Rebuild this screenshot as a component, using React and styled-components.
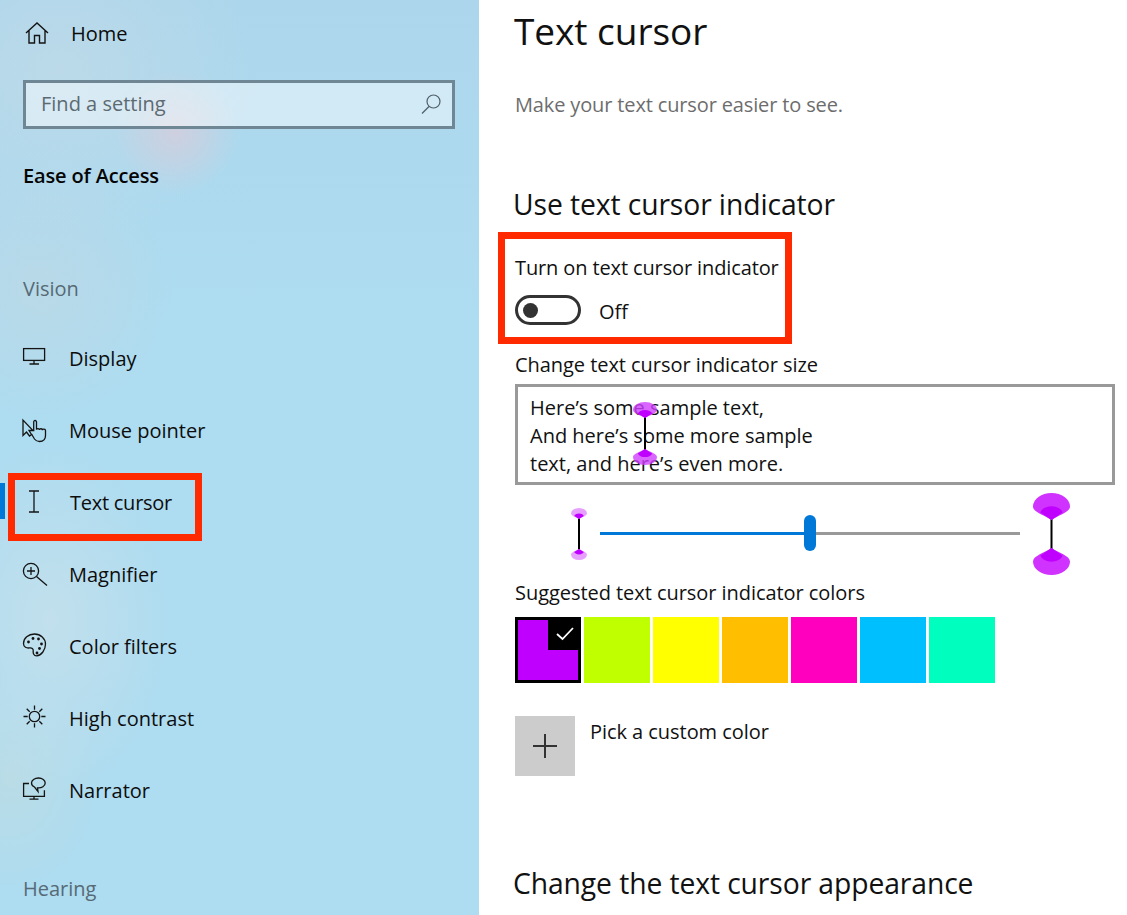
import React from "react";
import styled, { createGlobalStyle } from "styled-components";

const GlobalStyle = createGlobalStyle`
  html, body {
    margin: 0;
    padding: 0;
    height: 915px;
    overflow: hidden;
    background: #fff;
    font-family: "Open Sans", "Noto Sans", sans-serif;
    color: #111;
  }
`;

const Page = styled.div`
  display: flex;
  width: 1127px;
  height: 915px;
  overflow: hidden;
`;

const Sidebar = styled.aside`
  width: 479px;
  flex: none;
  height: 915px;
  overflow: hidden;
  background:
    radial-gradient(circle 62px at 176px 132px, rgba(216, 204, 218, 0.75), rgba(216, 204, 218, 0) 100%),
    radial-gradient(ellipse 200px 170px at 60px 70px, rgba(190, 218, 232, 0.85), rgba(190, 218, 232, 0) 100%),
    radial-gradient(ellipse 130px 130px at 40px 290px, rgba(190, 216, 228, 0.7), rgba(190, 216, 228, 0) 100%),
    radial-gradient(ellipse 120px 180px at 50px 620px, rgba(196, 224, 236, 0.9), rgba(196, 224, 236, 0) 100%),
    radial-gradient(ellipse 90px 110px at 10px 780px, rgba(190, 220, 226, 0.7), rgba(190, 220, 226, 0) 100%),
    linear-gradient(180deg, #acd6ec 0, #aedcf0 320px);
`;

const HomeRow = styled.div`
  display: flex;
  align-items: center;
  height: 66px;
  padding-left: 24px;
  gap: 21px;
  font-size: 20px;
  color: #0c0c0c;
`;

const SearchBox = styled.div`
  display: flex;
  align-items: center;
  justify-content: space-between;
  box-sizing: border-box;
  width: 432px;
  height: 49px;
  margin: 14px 0 0 23px;
  padding: 0 10px 2px 15px;
  border: 3px solid #6f8794;
  background: rgba(255, 255, 255, 0.46);
  font-size: 20px;
  color: #5d6a72;
`;

const SectionTitle = styled.div`
  margin: 32px 0 0 23px;
  height: 30px;
  line-height: 30px;
  font-size: 20px;
  font-weight: 600;
  letter-spacing: -0.15px;
  color: #050505;
`;

const GroupLabel = styled.div`
  height: 30px;
  line-height: 30px;
  margin-left: 23px;
  margin-top: ${(p) => p.$top}px;
  font-size: 20px;
  color: #566a75;
`;

const NavList = styled.nav`
  display: flex;
  flex-direction: column;
  margin-top: 18px;
`;

const NavRow = styled.div`
  position: relative;
  display: flex;
  align-items: center;
  height: 72px;
  padding-left: 19px;
  gap: ${(p) => (p.$active ? 21 : 20)}px;
  font-size: 20px;
  letter-spacing: ${(p) => (p.$active ? "-0.25px" : "0")};
  color: #0d0d0d;

  ${(p) =>
    p.$active &&
    `
    &::before {
      content: "";
      position: absolute;
      left: 0;
      top: 17px;
      width: 5px;
      height: 36px;
      background: #0078d7;
    }
    &::after {
      content: "";
      position: absolute;
      left: 8px;
      top: 7px;
      width: 194px;
      height: 68px;
      box-sizing: border-box;
      border: 7px solid #ff2a00;
    }
  `}
`;

const NavIcon = styled.svg`
  width: 30px;
  height: 30px;
  flex: none;
  fill: none;
  stroke: #141414;
  stroke-width: 1.3;
`;

const Main = styled.main`
  flex: 1;
  min-width: 0;
  padding-left: 36px;
`;

const PageTitle = styled.h1`
  margin: 6px 0 0 -1px;
  height: 50px;
  line-height: 50px;
  font-size: 37px;
  font-weight: 400;
  letter-spacing: -0.05px;
  color: #111;
  font-family: "Open Sans", sans-serif;
`;

const Subtitle = styled.p`
  margin: 34px 0 0;
  height: 30px;
  line-height: 30px;
  font-size: 20px;
  letter-spacing: -0.14px;
  color: #6d6d6d;
`;

const Heading = styled.h2`
  margin: ${(p) => p.$top}px 0 0 -2px;
  height: 40px;
  line-height: 40px;
  font-size: 28.3px;
  font-weight: 400;
  letter-spacing: -0.1px;
  color: #111;
`;

const Callout = styled.section`
  box-sizing: border-box;
  width: 294px;
  height: 112px;
  margin: 8px 0 0 -17px;
  padding: 15px 0 0 10px;
  border: 7px solid #ff2a00;
`;

const FieldLabel = styled.div`
  height: 28px;
  line-height: 28px;
  font-size: 20px;
  letter-spacing: ${(p) => p.$track || "-0.05px"};
  white-space: nowrap;
  color: #111;
`;

const ToggleRow = styled.div`
  display: flex;
  align-items: center;
  gap: 18px;
  margin-top: 13px;
  font-size: 20px;
`;

const ToggleText = styled.span`
  margin-top: 3px;
`;

const Toggle = styled.span`
  display: flex;
  align-items: center;
  box-sizing: border-box;
  width: 66px;
  height: 30px;
  padding-left: 5px;
  border: 3px solid #333;
  border-radius: 15px;

  &::after {
    content: "";
    width: 15px;
    height: 15px;
    border-radius: 50%;
    background: #333;
  }
`;

const SizeLabel = styled(FieldLabel)`
  margin-top: 7px;
`;

const SampleBox = styled.div`
  position: relative;
  box-sizing: border-box;
  width: 600px;
  height: 101px;
  margin-top: 5px;
  padding: 7px 0 0 12px;
  border: 3px solid #999;
  font-size: 20px;
  line-height: 28px;
  color: #111;
`;

const SampleCursor = styled.span`
  position: absolute;
  left: 115px;
  top: 15px;
  display: block;
  line-height: 0;
`;

const SliderRow = styled.div`
  box-sizing: border-box;
  display: flex;
  align-items: center;
  height: 94px;
  padding-top: 3px;
  margin-left: 56px;
`;

const CursorSlot = styled.span`
  display: flex;
  flex: none;
  line-height: 0;
`;

const Track = styled.div`
  position: relative;
  width: 420px;
  height: 3px;
  margin: 0 13px;
  background: #999;
`;

const TrackFill = styled.div`
  height: 100%;
  background: #0078d7;
`;

const Thumb = styled.div`
  position: absolute;
  top: -17px;
  width: 12px;
  height: 36px;
  margin-left: -6px;
  border-radius: 6px;
  background: #0078d7;
`;

const Swatches = styled.div`
  display: flex;
  gap: 3px;
  margin-top: 10px;
`;

const Swatch = styled.div`
  position: relative;
  box-sizing: border-box;
  width: 66px;
  height: 66px;
  background: ${(p) => p.$color};
  ${(p) => p.$selected && "border: 3px solid #000;"}
`;

const Check = styled.span`
  position: absolute;
  right: -3px;
  top: -3px;
  display: flex;
  align-items: center;
  justify-content: center;
  width: 33px;
  height: 33px;
  background: #000;
`;

const CustomRow = styled.div`
  display: flex;
  gap: 15px;
  margin-top: 33px;
`;

const PlusTile = styled.div`
  display: flex;
  align-items: center;
  justify-content: center;
  width: 60px;
  height: 60px;
  background: #ccc;
`;

const CustomLabel = styled(FieldLabel)`
  margin-top: 2px;
`;

const navItems = [
  {
    label: "Display",
    icon: (
      <>
        <rect x="4.6" y="5.6" width="21" height="11.8" />
        <path d="M15 17.5v3M10.5 21h9.5" />
      </>
    ),
  },
  {
    label: "Mouse pointer",
    icon: (
      <>
        <path d="M4 5v15.5l3.5-3.5 3 4 2-1.5-2.5-4H14z" />
        <path d="M12.5 19l3 5c1.2 1.7 3 2.5 5 2.5 3.5 0 6-2 6-6v-5c0-1.8-3-2-3-.3 0-1.8-3-2-3-.3 0-1.6-3-1.8-3-.2V7c0-2-2.8-2-2.8 0v9" />
      </>
    ),
  },
  {
    label: "Text cursor",
    active: true,
    icon: <path d="M10 4h10M15 4v21M10 25h10" />,
  },
  {
    label: "Magnifier",
    icon: (
      <>
        <circle cx="12" cy="12" r="7.6" />
        <path d="M17.5 17.5l10.5 9M8 12h8M12 8v8" />
      </>
    ),
  },
  {
    label: "Color filters",
    icon: (
      <g transform="translate(0.5 -1)">
        <path d="M15 4C8.8 4 4 8.2 4 13.5c0 3.8 3.2 4.8 6 4.4 2.4-.3 4 .8 3.7 3-.3 2.4.6 5 3.3 5 5-.4 9-6 9-11.9C26 8.5 21 4 15 4z" />
        <circle cx="9" cy="12" r="1.4" fill="#141414" stroke="none" />
        <circle cx="13.5" cy="8.5" r="1.4" fill="#141414" stroke="none" />
        <circle cx="19" cy="9" r="1.4" fill="#141414" stroke="none" />
        <circle cx="22" cy="14" r="1.4" fill="#141414" stroke="none" />
        <circle cx="20" cy="18.5" r="1.4" fill="#141414" stroke="none" />
        <circle cx="17.5" cy="23" r="1.4" fill="#141414" stroke="none" />
      </g>
    ),
  },
  {
    label: "High contrast",
    icon: (
      <g transform="translate(0.5 -1.5)">
        <circle cx="15" cy="15" r="5.2" />
        <path d="M15 4v4.2M15 21.8V26M4 15h4.2M21.8 15H26M7.2 7.2l3 3M19.8 19.8l3 3M22.8 7.2l-3 3M10.2 19.8l-3 3" />
      </g>
    ),
  },
  {
    label: "Narrator",
    icon: (
      <g transform="translate(0 -1)">
        <path d="M10 9.5H4.6v12.8h20.8v-6" />
        <path d="M15 22.5v2.4M10.5 25.2h9" />
        <path d="M19.5 4c-3.8 0-7 2.2-7 5 0 1.8 1.3 3.2 3 4l3.5 4.5-.5-3.7c4.2.4 7.7-1.6 7.7-4.8 0-2.8-2.9-5-6.7-5z" />
      </g>
    ),
  },
];

const swatchColors = ["#bf00ff", "#bfff00", "#ffff00", "#ffbf00", "#ff00bf", "#00bfff", "#00ffbf"];

// top and bottom blobs share one shape, the bottom one is just flipped
const Blob = ({ w, lobe, outer, inner, flip, h }) => {
  const rx = w / 2;
  const ry = lobe * 0.5;
  const outerPath = `M0 ${ry} A${rx} ${ry} 0 0 1 ${w} ${ry} C${w} ${lobe * 0.72} ${w * 0.68} ${lobe * 0.82} ${rx} ${lobe} C${w * 0.32} ${lobe * 0.82} 0 ${lobe * 0.72} 0 ${ry}Z`;
  const innerPath = `M${w * 0.2} ${lobe * 0.72} C${w * 0.28} ${lobe * 0.42} ${w * 0.72} ${lobe * 0.42} ${w * 0.8} ${lobe * 0.72} L${rx} ${lobe}Z`;
  return (
    <g transform={flip ? `translate(0 ${h}) scale(1 -1)` : undefined}>
      <path d={outerPath} fill={outer} />
      <path d={innerPath} fill={inner} />
    </g>
  );
};

const Cursor = ({ w, h, lobe, outer, stem = 2 }) => (
  <svg width={w} height={h} viewBox={`0 0 ${w} ${h}`}>
    <rect x={w / 2 - stem / 2} y={lobe - 1} width={stem} height={h - lobe * 2 + 2} fill="#000" />
    <Blob w={w} h={h} lobe={lobe} outer={outer} inner="#c000ff" />
    <Blob w={w} h={h} lobe={lobe} outer={outer} inner="#c000ff" flip />
  </svg>
);

const App = () => {
  return (
    <>
      <GlobalStyle />
      <Page>
        <Sidebar>
          <HomeRow>
            <svg width="26" height="26" viewBox="0 0 26 26" fill="none" stroke="#141414" strokeWidth="1.4">
              <path d="M2 13L13 3l11 10M5 10.5V23h5.5v-7.5h5V23H21V10.5" />
            </svg>
            Home
          </HomeRow>
          <SearchBox>
            Find a setting
            <svg width="22" height="22" viewBox="0 0 22 22" fill="none" stroke="#4f5f68" strokeWidth="1.2">
              <circle cx="13.5" cy="8.5" r="6.5" />
              <path d="M9 13.5L2 20.5" />
            </svg>
          </SearchBox>
          <SectionTitle>Ease of Access</SectionTitle>
          <GroupLabel $top={83}>Vision</GroupLabel>
          <NavList>
            {navItems.map((item) => (
              <NavRow key={item.label} $active={item.active}>
                <NavIcon viewBox="0 0 30 30">{item.icon}</NavIcon>
                {item.label}
              </NavRow>
            ))}
          </NavList>
          <GroupLabel $top={48}>Hearing</GroupLabel>
        </Sidebar>
        <Main>
          <PageTitle>Text cursor</PageTitle>
          <Subtitle>Make your text cursor easier to see.</Subtitle>
          <Heading $top={64}>Use text cursor indicator</Heading>
          <Callout>
            <FieldLabel $track="-0.12px">Turn on text cursor indicator</FieldLabel>
            <ToggleRow>
              <Toggle />
              <ToggleText>Off</ToggleText>
            </ToggleRow>
          </Callout>
          <SizeLabel>Change text cursor indicator size</SizeLabel>
          <SampleBox>
            Here’s some sample text,
            <br />
            And here’s some more sample
            <br />
            text, and here’s even more.
            <SampleCursor>
              <Cursor w={24} h={63} lobe={16} outer="rgba(208, 64, 255, 0.8)" />
            </SampleCursor>
          </SampleBox>
          <SliderRow>
            <CursorSlot>
              <Cursor w={16} h={52} lobe={11} outer="#e8a0ff" />
            </CursorSlot>
            <Track>
              <TrackFill style={{ width: "50%" }} />
              <Thumb style={{ left: "50%" }} />
            </Track>
            <CursorSlot>
              <Cursor w={37} h={82} lobe={27} outer="#d033ff" />
            </CursorSlot>
          </SliderRow>
          <FieldLabel>Suggested text cursor indicator colors</FieldLabel>
          <Swatches>
            {swatchColors.map((color, i) => (
              <Swatch key={color} $color={color} $selected={i === 0}>
                {i === 0 && (
                  <Check>
                    <svg width="20" height="16" viewBox="0 0 20 16" fill="none" stroke="#fff" strokeWidth="1.8">
                      <path d="M2 8l5.5 5L18 2" />
                    </svg>
                  </Check>
                )}
              </Swatch>
            ))}
          </Swatches>
          <CustomRow>
            <PlusTile>
              <svg width="24" height="24" viewBox="0 0 24 24" stroke="#333" strokeWidth="2">
                <path d="M0 12h24M12 0v24" />
              </svg>
            </PlusTile>
            <CustomLabel>Pick a custom color</CustomLabel>
          </CustomRow>
          <Heading $top={87}>Change the text cursor appearance</Heading>
        </Main>
      </Page>
    </>
  );
};

export default App;
